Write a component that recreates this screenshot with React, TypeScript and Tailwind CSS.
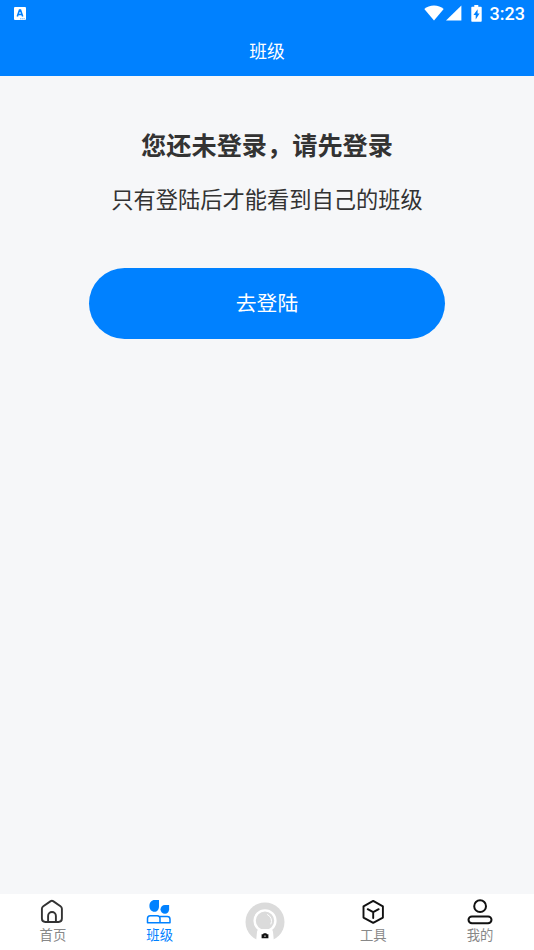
import React from "react";
import clsx from "clsx";

function StatusBar() {
  return (
    <div className="flex h-[27px] items-center justify-between pl-3.5 pr-[9px] text-white">
      <svg className="h-[13px] w-3" viewBox="0 0 12 13">
        <rect width="12" height="13" rx="1" fill="#fff" />
        <path d="M3.300 9.500 5.500 3h1l2.200 6.500M4 7.500h4" fill="none" stroke="#0081ff" strokeWidth="1.600" />
        <path d="M6 11.800h5" stroke="#0081ff" strokeWidth=".6" strokeDasharray="1.500 .6" />
      </svg>
      <div className="flex items-center">
        <svg className="-mt-0.5 h-4 w-5" viewBox="0 0 20 16" fill="#fff">
          <path d="M10 15.500.3 3.900C2.800 1.900 6.200.6 10 .6s7.200 1.300 9.700 3.300z" />
        </svg>
        <svg className="-mt-0.5 ml-0.5 h-4 w-4" viewBox="0 0 16 16" fill="#fff">
          <path d="M0 15.600 15.400.4v15.200z" />
        </svg>
        <svg className="-mt-px ml-[9px] h-[17px] w-[11px]" viewBox="0 0 11 17">
          <path d="M3.300 0h4v1.700H10q.7 0 .7.700V16q0 .8-.7.8H1q-.7 0-.7-.8V2.400q0-.7.7-.7h2.300z" fill="#fff" />
          <path d="M6.600 4.200v4.200h2L4.700 14.500V10H2.500z" fill="#0081ff" />
        </svg>
        <span className="ml-2 font-[Roboto,sans-serif] text-[18px] leading-[27px] font-medium">3:23</span>
      </div>
    </div>
  );
}

function HomeIcon() {
  return (
    <svg className="h-7 w-7" viewBox="0 0 28 28" fill="none" stroke="#333" strokeWidth="1.900" strokeLinejoin="round">
      <path d="M11.700 3.100q1.200-.7 2.400 0l7.400 5.200q1.400 1 1.400 2.500v9.800q0 3.400-3.400 3.400H6.300q-3.400 0-3.400-3.400v-9.800q0-1.500 1.400-2.500z" />
      <path d="M9.100 24v-6.100a3.900 3.900 0 0 1 7.800 0V24" />
    </svg>
  );
}

function ClassIcon() {
  return (
    <svg className="h-7 w-7" viewBox="0 0 28 28" fill="none">
      <path d="M8.700 2.100H13v6.100c0 3.200-1.800 5.600-4.500 5.600-3 0-5.100-2.500-5.100-5.800 0-3.400 2.200-5.900 5.300-5.900z" fill="#0081ff" />
      <path d="M19 6.900h4.100v4.400c0 2.700-1.700 4.500-4.100 4.500-2.600 0-4.500-1.900-4.500-4.500 0-2.500 1.900-4.400 4.500-4.400z" fill="#0081ff" />
      <path d="M1.500 24.800v-4.300q0-2.800 2.800-2.800h6.900q2.800 0 2.800 2.800v4.300zM14 24.800h10v-3.500q0-2.700-2.700-2.700h-8" stroke="#0081ff" strokeWidth="1.500" strokeLinejoin="round" />
    </svg>
  );
}

function ToolIcon() {
  return (
    <svg className="h-7 w-7" viewBox="0 0 28 28" fill="none" stroke="#111" strokeWidth="1.900" strokeLinejoin="round" strokeLinecap="round">
      <path d="M13.200 2.900 22.900 8.300v11.300l-9.700 5.300-9.700-5.300V8.300z" />
      <path d="m7.700 11.200 5.500 3 5.500-3M13.200 14.200v5.800" />
    </svg>
  );
}

function MineIcon() {
  return (
    <svg className="h-7 w-7" viewBox="0 0 28 28" fill="none" stroke="#111" strokeWidth="2">
      <circle cx="13.100" cy="8.200" r="5.900" />
      <rect x="1.500" y="18.400" width="23" height="6.900" rx="3.450" />
    </svg>
  );
}

function CameraIcon() {
  return (
    <svg className="mt-2 mr-[3px] h-10 w-10" viewBox="0 0 40 40" fill="none">
      <circle cx="20" cy="20" r="19.500" fill="#dbdbdb" />
      <circle cx="20" cy="18.800" r="10.400" fill="#dbdbdb" stroke="#fff" strokeWidth="2.400" />
      <path d="M22.500 12.600a6.800 6.800 0 0 1 3.400 9.400" stroke="#fff" strokeWidth="1" strokeLinecap="round" />
      <path d="M11 40l1-10q.3-3 3-3h10q2.700 0 3 3l1 10z" fill="#fff" />
      <path d="M16.600 32.300h1.400l.7-1h2.600l.7 1h1.400v3.900h-6.800z" fill="#111" />
      <circle cx="20" cy="34.200" r=".9" fill="#999" />
    </svg>
  );
}

const tabs = [
  { label: "首页", icon: <HomeIcon /> },
  { label: "班级", icon: <ClassIcon />, active: true },
  { icon: <CameraIcon /> },
  { label: "工具", icon: <ToolIcon /> },
  { label: "我的", icon: <MineIcon /> },
];

function TabBar() {
  return (
    <nav className="grid h-14 shrink-0 grid-cols-5 bg-white">
      {tabs.map((tab, i) => (
        <div key={i} className="flex flex-col items-center">
          {tab.label ? (
            <>
              <div className="mt-1 h-7">{tab.icon}</div>
              <span
                className={clsx(
                  "-mt-px mr-px text-[13.350px] leading-5",
                  tab.active ? "text-[#0081ff]" : "text-[#888]"
                )}
              >
                {tab.label}
              </span>
            </>
          ) : (
            tab.icon
          )}
        </div>
      ))}
    </nav>
  );
}

export default function App() {
  return (
    <div className="flex h-screen flex-col bg-[#f6f7f9] font-['Noto_Sans_CJK_SC',sans-serif] text-[#333]">
      <header className="h-[76px] shrink-0 bg-[#0081ff]">
        <StatusBar />
        <h1 className="text-center text-[17.800px] leading-[46px] text-white">班级</h1>
      </header>
      <main className="flex flex-1 flex-col items-center">
        <h2 className="mt-[50px] text-[25.200px] leading-9 font-bold">您还未登录，请先登录</h2>
        <p className="mt-5 text-[22.250px] leading-8">只有登陆后才能看到自己的班级</p>
        <button className="mt-[54px] h-[71px] w-[356px] rounded-full bg-[#0081ff] pb-0.5 text-[20.800px] text-white">
          去登陆
        </button>
      </main>
      <TabBar />
    </div>
  );
}
